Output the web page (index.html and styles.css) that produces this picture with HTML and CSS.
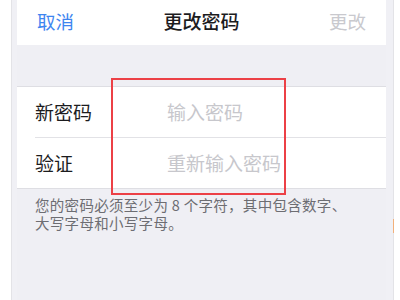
FILE: index.html
```html
<!DOCTYPE html>
<html lang="zh-CN">
<head>
<meta charset="utf-8">
<link rel="stylesheet" href="styles.css">
</head>
<body>
<div class="device">
  <div class="screen">
    <header class="nav">
      <span class="nav-btn cancel">取消</span>
      <span class="nav-title">更改密码</span>
      <span class="nav-btn done">更改</span>
    </header>
    <div class="spacer"></div>
    <section class="group">
      <div class="row">
        <span class="label">新密码</span>
        <span class="placeholder">输入密码</span>
      </div>
      <div class="row">
        <span class="label">验证</span>
        <span class="placeholder">重新输入密码</span>
      </div>
    </section>
    <p class="hint">您的密码必须至少为 8 个字符，其中包含数字、<br>大写字母和小写字母。</p>
  </div>
</div>
<div class="highlight"></div>
<div class="sliver"></div>
</body>
</html>
```

FILE: styles.css
```css
* { box-sizing: border-box; }
html, body {
  margin: 0;
  padding: 0;
}
body {
  width: 400px;
  height: 300px;
  background: #ffffff;
  position: relative;
  overflow: hidden;
  font-family: "Noto Sans CJK SC", "Noto Sans", sans-serif;
}
.device {
  margin-left: 11px;
  width: 383px;
  height: 300px;
  border-left: 1px solid #e3e3e7;
  border-right: 1px solid #e3e3e7;
  background: #f0f0f5;
  padding: 0 7px 0 5px;
}
.screen {
  height: 100%;
  background: #efeff4;
  display: flex;
  flex-direction: column;
}
.nav {
  height: 45px;
  background: #ffffff;
  display: flex;
  align-items: center;
  justify-content: space-between;
  padding: 0 20px 3px 20px;
  font-size: 18.5px;
  line-height: 24px;
}
.cancel { color: #3d85f0; }
.done { color: #c9c9ce; }
.nav-title {
  color: #1c1c1e;
  font-weight: 500;
  font-size: 19px;
}
.spacer { height: 41px; }
.group {
  background: #ffffff;
  border-top: 1px solid #dedee3;
  border-bottom: 1px solid #dedee3;
  padding-left: 18px;
}
.row {
  height: 50px;
  display: flex;
  align-items: center;
  font-size: 19px;
  line-height: 24px;
}
.row + .row {
  border-top: 1px solid #e2e2e6;
  height: 51px;
}
.label {
  width: 132px;
  color: #1c1c1e;
}
.placeholder { color: #c7c7cc; }
.hint {
  margin: 0;
  padding: 7px 18px 0 18px;
  font-size: 14.5px;
  line-height: 18px;
  color: #6d6d72;
  letter-spacing: 0.3px;
}
.highlight {
  position: absolute;
  left: 111px;
  top: 78px;
  width: 175px;
  height: 117px;
  border: 2px solid #ec4046;
}
.sliver {
  position: absolute;
  left: 393px;
  top: 219px;
  width: 1px;
  height: 14px;
  background: #f2b07a;
}
```
